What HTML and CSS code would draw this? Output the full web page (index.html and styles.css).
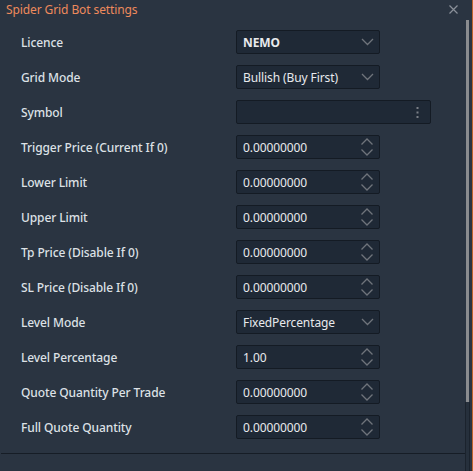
FILE: index.html
```html
<!DOCTYPE html>
<html>
<head>
<meta charset="utf-8">
<link rel="stylesheet" href="styles.css">
</head>
<body>
<div class="window">
  <div class="main">
    <div class="titlebar">
      <span class="title">Spider Grid Bot settings</span>
      <svg class="close" width="9" height="9" viewBox="0 0 9 9"><path d="M0.5 0.5 L8.5 8.5 M8.5 0.5 L0.5 8.5" stroke="#8a9099" stroke-width="1.2" fill="none"/></svg>
    </div>
    <div class="form">
      <div class="row"><span class="label">Licence</span><div class="field select"><span class="value bold">NEMO</span><svg class="chev" width="13" height="8" viewBox="0 0 13 8"><path d="M1 1 L6.5 6.5 L12 1" stroke="#6f747b" stroke-width="1.3" fill="none"/></svg></div></div>
      <div class="row"><span class="label">Grid Mode</span><div class="field select"><span class="value">Bullish (Buy First)</span><svg class="chev" width="13" height="8" viewBox="0 0 13 8"><path d="M1 1 L6.5 6.5 L12 1" stroke="#6f747b" stroke-width="1.3" fill="none"/></svg></div></div>
      <div class="row"><span class="label">Symbol</span><div class="field wide"><span class="value"></span><svg class="dots" width="3" height="11" viewBox="0 0 3 11"><rect x="0.5" y="0" width="2" height="2" fill="#7a7f86"/><rect x="0.5" y="4.5" width="2" height="2" fill="#7a7f86"/><rect x="0.5" y="9" width="2" height="2" fill="#7a7f86"/></svg></div></div>
      <div class="row"><span class="label">Trigger Price (Current If 0)</span><div class="field"><span class="value">0.00000000</span><svg class="spin" width="14" height="20" viewBox="0 0 14 20"><path d="M1.5 7.5 L7 2 L12.5 7.5 M1.5 12.5 L7 18 L12.5 12.5" stroke="#6f747b" stroke-width="1.3" fill="none"/></svg></div></div>
      <div class="row"><span class="label">Lower Limit</span><div class="field"><span class="value">0.00000000</span><svg class="spin" width="14" height="20" viewBox="0 0 14 20"><path d="M1.5 7.5 L7 2 L12.5 7.5 M1.5 12.5 L7 18 L12.5 12.5" stroke="#6f747b" stroke-width="1.3" fill="none"/></svg></div></div>
      <div class="row"><span class="label">Upper Limit</span><div class="field"><span class="value">0.00000000</span><svg class="spin" width="14" height="20" viewBox="0 0 14 20"><path d="M1.5 7.5 L7 2 L12.5 7.5 M1.5 12.5 L7 18 L12.5 12.5" stroke="#6f747b" stroke-width="1.3" fill="none"/></svg></div></div>
      <div class="row"><span class="label">Tp Price (Disable If 0)</span><div class="field"><span class="value">0.00000000</span><svg class="spin" width="14" height="20" viewBox="0 0 14 20"><path d="M1.5 7.5 L7 2 L12.5 7.5 M1.5 12.5 L7 18 L12.5 12.5" stroke="#6f747b" stroke-width="1.3" fill="none"/></svg></div></div>
      <div class="row"><span class="label">SL Price (Disable If 0)</span><div class="field"><span class="value">0.00000000</span><svg class="spin" width="14" height="20" viewBox="0 0 14 20"><path d="M1.5 7.5 L7 2 L12.5 7.5 M1.5 12.5 L7 18 L12.5 12.5" stroke="#6f747b" stroke-width="1.3" fill="none"/></svg></div></div>
      <div class="row"><span class="label">Level Mode</span><div class="field select"><span class="value">FixedPercentage</span><svg class="chev" width="13" height="8" viewBox="0 0 13 8"><path d="M1 1 L6.5 6.5 L12 1" stroke="#6f747b" stroke-width="1.3" fill="none"/></svg></div></div>
      <div class="row"><span class="label">Level Percentage</span><div class="field"><span class="value">1.00</span><svg class="spin" width="14" height="20" viewBox="0 0 14 20"><path d="M1.5 7.5 L7 2 L12.5 7.5 M1.5 12.5 L7 18 L12.5 12.5" stroke="#6f747b" stroke-width="1.3" fill="none"/></svg></div></div>
      <div class="row"><span class="label">Quote Quantity Per Trade</span><div class="field"><span class="value">0.00000000</span><svg class="spin" width="14" height="20" viewBox="0 0 14 20"><path d="M1.5 7.5 L7 2 L12.5 7.5 M1.5 12.5 L7 18 L12.5 12.5" stroke="#6f747b" stroke-width="1.3" fill="none"/></svg></div></div>
      <div class="row"><span class="label">Full Quote Quantity</span><div class="field"><span class="value">0.00000000</span><svg class="spin" width="14" height="20" viewBox="0 0 14 20"><path d="M1.5 7.5 L7 2 L12.5 7.5 M1.5 12.5 L7 18 L12.5 12.5" stroke="#6f747b" stroke-width="1.3" fill="none"/></svg></div></div>
    </div>
    <div class="footer"></div>
  </div>
  <div class="scroll">
    <div class="thumb"></div>
    <div class="track"></div>
  </div>
  <div class="edge"></div>
</div>
</body>
</html>
```
FILE: styles.css
```css
html, body {
  margin: 0;
  padding: 0;
  background: #2a3441;
}
body {
  width: 473px;
  height: 471px;
  overflow: hidden;
  font-family: "Noto Sans", "Open Sans", sans-serif;
  font-size: 12px;
  letter-spacing: -0.1px;
  color: #dde1e6;
}
.window {
  display: flex;
  height: 471px;
}
.main {
  flex: 1;
  display: flex;
  flex-direction: column;
}
.titlebar {
  height: 20px;
  display: flex;
  align-items: center;
  justify-content: space-between;
  padding: 0 8px 0 6px;
}
.title {
  color: #ee8a5c;
  font-size: 12px;
  line-height: 20px;
}
.close {
  display: block;
  margin-top: -1px;
}
.form {
  display: flex;
  flex-direction: column;
  gap: 11px;
  padding: 10px 0 0 21px;
  height: 433px;
  box-sizing: border-box;
}
.row {
  display: flex;
  align-items: center;
  height: 24px;
}
.label {
  width: 215px;
  flex: none;
  font-weight: 500;
  color: #dde1e6;
}
.field {
  box-sizing: border-box;
  width: 144px;
  height: 24px;
  background: #1f2936;
  border: 1px solid #141b24;
  border-radius: 2px;
  display: flex;
  align-items: center;
  justify-content: space-between;
  padding: 0 5px 0 6px;
}
.field.wide {
  width: 195px;
  padding-right: 11px;
}
.value {
  color: #e8eaed;
}
.value.bold {
  font-weight: 700;
}
.chev, .spin, .dots {
  display: block;
  flex: none;
}
.footer {
  border-top: 1px solid #161d26;
  margin-left: 1px;
  flex: 1;
}
.scroll {
  width: 5px;
  display: flex;
  flex-direction: column;
  padding-top: 20px;
  margin-right: 1px;
}
.thumb {
  height: 382px;
  width: 3px;
  background: #8a8c8f;
}
.track {
  flex: 1;
  width: 3px;
  background: #26303c;
  border-left: 1px solid #1b232d;
  border-right: 1px solid #1b232d;
  margin-left: -1px;
}
.edge {
  width: 1px;
  background: #c0652f;
}
```
